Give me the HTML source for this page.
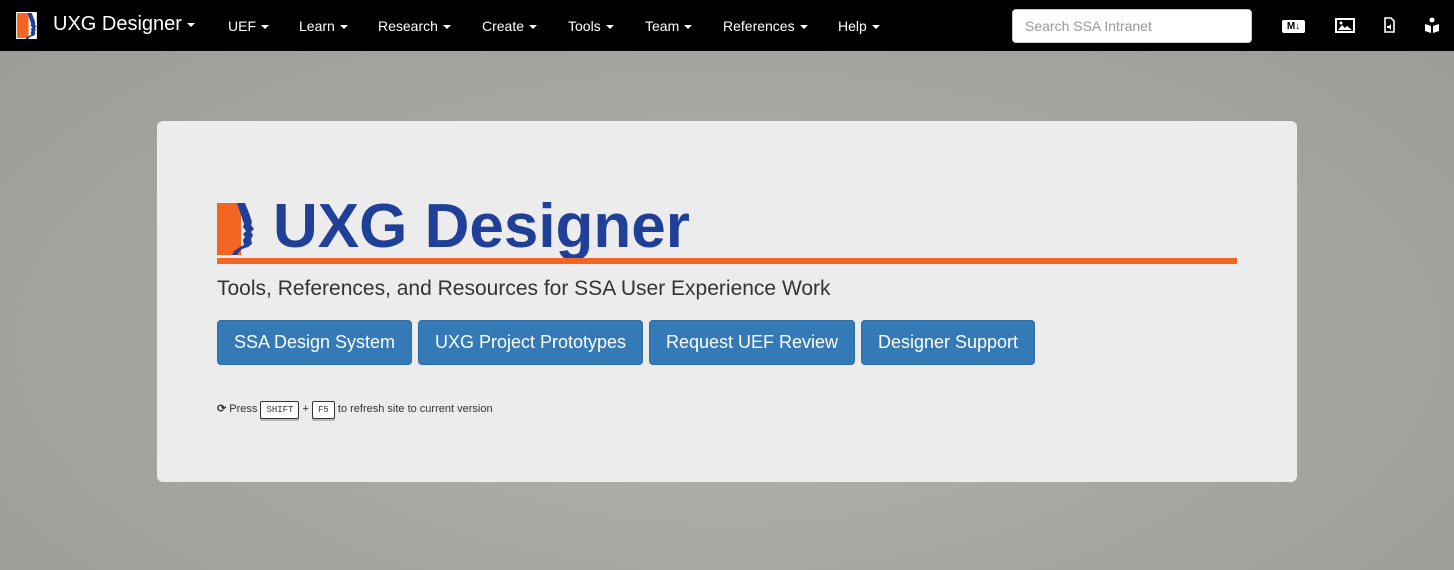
<!DOCTYPE html>
<html><head><meta charset="utf-8"><style>
*{box-sizing:border-box}
body{margin:0;width:1454px;height:570px;overflow:hidden;font-family:"Liberation Sans",Arial,sans-serif;background:radial-gradient(ellipse at 50% 60%,#b4b4b0 0%,#a6a6a2 50%,#9a9a96 100%);position:relative}
.nav{position:absolute;top:0;left:0;width:1454px;height:51px;background:#000;color:#fff}
.nav .it{position:absolute;top:18px;font-size:14px;color:#fff}
.caret{display:inline-block;width:0;height:0;border-left:4px solid transparent;border-right:4px solid transparent;border-top:4px solid #fff;vertical-align:middle;margin-left:5px}
.search{position:absolute;left:1012px;top:9px;width:240px;height:34px;background:#fff;border-radius:4px;border:1px solid #ccc;color:#999;font-size:14px;padding:8px 12px}
.card{position:absolute;left:157px;top:121px;width:1140px;height:361px;background:#ececec;border-radius:6px}
.btn{position:absolute;top:199px;height:45px;background:#337ab7;border:1px solid #2e6da4;border-radius:4px;color:#fff;font-size:18px;line-height:43px;text-align:center}
kbd{display:inline-block;font-family:"Liberation Mono",monospace;font-size:9px;border:1px solid #333;background:#fff;border-radius:2px;padding:3px 5px;box-shadow:0 2px 0 #bbb;color:#333}
</style></head><body>
<div class="nav">
 <svg style="position:absolute;left:16px;top:12px" width="21" height="27" viewBox="0 0 40 52"><rect width="40" height="52" fill="#fff"/><rect x="2" y="2" width="22" height="48" fill="#f26522"/><path d="M22 2h8l4 10 3 9-1 3 3 4-3 3 2 3-2 4 1 5-4 3-6 2-4 4v2h-6l2-4 6-4 4-2-1-5 2-3-2-3 3-3-3-4 1-3-3-9z" fill="#1f3f99"/></svg>
 <div class="it" style="left:53px;top:13px;font-size:20px">UXG Designer<span class="caret"></span></div>
 <div class="it" style="left:228px">UEF<span class="caret"></span></div>
 <div class="it" style="left:299px">Learn<span class="caret"></span></div>
 <div class="it" style="left:378px">Research<span class="caret"></span></div>
 <div class="it" style="left:482px">Create<span class="caret"></span></div>
 <div class="it" style="left:568px">Tools<span class="caret"></span></div>
 <div class="it" style="left:645px">Team<span class="caret"></span></div>
 <div class="it" style="left:723px">References<span class="caret"></span></div>
 <div class="it" style="left:838px">Help<span class="caret"></span></div>
 <div class="search">Search SSA Intranet</div>
 <div style="position:absolute;left:1282px;top:20px;width:23px;height:13px;background:#fff;border-radius:2px;color:#000;font-size:10px;font-weight:bold;line-height:13px;text-align:center">M↓</div>
 <svg style="position:absolute;left:1335px;top:18px" width="20" height="15"><rect x="1" y="1" width="18" height="13" fill="none" stroke="#fff" stroke-width="2"/><path d="M3 12l4-5 3 3 2-2 5 4z" fill="#fff"/><circle cx="6" cy="5" r="1.5" fill="#fff"/></svg>
 <svg style="position:absolute;left:1384px;top:17px" width="11" height="16"><path d="M1 1h6l3 3v11H1z" fill="none" stroke="#fff" stroke-width="1.6"/><path d="M3 9h2l2-2v6l-2-2H3z" fill="#fff"/></svg>
 <svg style="position:absolute;left:1424px;top:17px" width="16" height="17"><circle cx="8" cy="3" r="2.5" fill="#fff"/><path d="M1 7l6 2v7l-6-2zM15 7l-6 2v7l6-2z" fill="#fff"/></svg>
</div>
<div class="card">
 <svg style="position:absolute;left:60px;top:82px" width="40" height="52" viewBox="0 0 40 52"><rect x="0" y="0" width="24" height="52" fill="#f26522"/><path d="M20 0h8l4 10 3 9-1 3 3 4-3 3 2 3-2 4 1 5-4 3-6 2-4 4v2h-6l2-4 6-4 4-2-1-5 2-3-2-3 3-3-3-4 1-3-3-9z" fill="#1f3f99"/></svg>
 <div style="position:absolute;left:116px;top:70px;font-size:62px;font-weight:bold;color:#1f3f99">UXG Designer</div>
 <div style="position:absolute;left:60px;top:137px;width:1020px;height:6px;background:#f26522"></div>
 <div style="position:absolute;left:60px;top:156px;font-size:21px;color:#333">Tools, References, and Resources for SSA User Experience Work</div>
 <div class="btn" style="left:60px;width:195px">SSA Design System</div>
 <div class="btn" style="left:261px;width:225px">UXG Project Prototypes</div>
 <div class="btn" style="left:492px;width:206px">Request UEF Review</div>
 <div class="btn" style="left:704px;width:174px">Designer Support</div>
 <div style="position:absolute;left:60px;top:280px;font-size:11px;color:#333"><span style="font-weight:bold">⟳</span> Press <kbd>SHIFT</kbd> + <kbd>F5</kbd> to refresh site to current version</div>
</div>
</body></html>
